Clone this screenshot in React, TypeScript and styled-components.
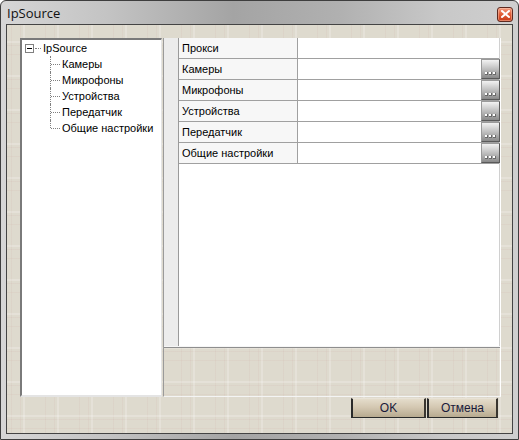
import React from 'react';
import styled, { createGlobalStyle } from 'styled-components';

const GlobalStyle = createGlobalStyle`
    html, body {
        margin: 0;
        padding: 0;
        background: #ffffff;
    }

    * {
        box-sizing: border-box;
    }
`;

const treeItems = ['Камеры', 'Микрофоны', 'Устройства', 'Передатчик', 'Общие настройки'];

interface PropertyRow {
    name: string;
    editor?: boolean;
}

const rows: PropertyRow[] = [
    { name: 'Прокси' },
    { name: 'Камеры', editor: true },
    { name: 'Микрофоны', editor: true },
    { name: 'Устройства', editor: true },
    { name: 'Передатчик', editor: true },
    { name: 'Общие настройки', editor: true },
];

// beige skin with a faint square pattern
const beige = `
    background-color: #dedace;
    background-image:
        linear-gradient(90deg, transparent 0 16px, rgba(255, 255, 255, 0.2) 16px 18px, transparent 18px 34px),
        linear-gradient(0deg, transparent 0 16px, rgba(255, 255, 255, 0.2) 16px 18px, transparent 18px 34px),
        linear-gradient(90deg, transparent 0 4px, rgba(205, 170, 160, 0.12) 4px 5px, transparent 5px 13px, rgba(205, 170, 160, 0.12) 13px 14px, transparent 14px 34px),
        linear-gradient(0deg, transparent 0 4px, rgba(205, 170, 160, 0.12) 4px 5px, transparent 5px 13px, rgba(205, 170, 160, 0.12) 13px 14px, transparent 14px 34px);
    background-size: 34px 34px;
`;

const Window = styled.div`
    display: flex;
    flex-direction: column;
    width: 519px;
    height: 440px;
    padding: 0 5px 5px 5px;
    border: 1px solid #3e3e3e;
    border-radius: 6px 6px 0 0;
    background: linear-gradient(90deg, #d6d6d6 0%, #c4c4c4 20%, #a4a4a4 45%, #b0b0b0 65%, #c8c8c8 85%, #cfcfcf 100%);
    font-family: 'Liberation Sans', Arial, sans-serif;
`;

const TitleBar = styled.div`
    display: flex;
    align-items: center;
    justify-content: space-between;
    height: 23px;
    padding: 0 0 0 1px;
`;

const Title = styled.span`
    font-family: 'Open Sans', 'Noto Sans', sans-serif;
    font-size: 13px;
    color: #111111;
    margin-top: 1px;
`;

const CloseButton = styled.div`
    display: flex;
    align-items: center;
    justify-content: center;
    width: 16px;
    height: 15px;
    margin-top: 3px;
    border: 1px solid #5e2a20;
    border-radius: 3px;
    background: linear-gradient(180deg, #f5a084 0%, #e2603a 45%, #c83a16 100%);
    box-shadow: inset 0 0 0 1px rgba(255, 210, 190, 0.45);
`;

const Client = styled.div`
    display: flex;
    flex-direction: column;
    flex: 1;
    border: 1px solid #444444;
    ${beige}
`;

const Body = styled.div`
    display: flex;
    gap: 1px;
    height: 372px;
    padding: 13px 10px 0 13px;
`;

const TreePanel = styled.div`
    width: 142px;
    height: 359px;
    padding: 0 0 0 3px;
    background: #ffffff;
    border-top: 2px solid #7a7a7a;
    border-left: 2px solid #7a7a7a;
    border-right: 1px solid #e4e4e4;
    border-bottom: 2px solid #e4e4e4;
    font-size: 11px;
    color: #000000;
    white-space: nowrap;
`;

const TreeRow = styled.div`
    display: flex;
    align-items: center;
    height: 16px;
`;

const Expander = styled.span`
    display: flex;
    align-items: center;
    justify-content: center;
    width: 9px;
    height: 9px;
    border: 1px solid #808080;
    background: #ffffff;

    &::after {
        content: '';
        width: 5px;
        height: 1px;
        background: #000000;
    }
`;

const RootDots = styled.span`
    width: 6px;
    margin: 0 2px 0 1px;
    border-top: 1px dotted #808080;
`;

const Children = styled.div`
    padding-left: 25px;
`;

const Connector = styled.span<{ $last?: boolean }>`
    position: relative;
    width: 11px;
    height: 16px;
    margin-right: 1px;

    &::before {
        content: '';
        position: absolute;
        left: 0;
        top: 0;
        height: ${(p) => (p.$last ? '8px' : '16px')};
        border-left: 1px dotted #808080;
    }

    &::after {
        content: '';
        position: absolute;
        left: 1px;
        top: 8px;
        width: 9px;
        border-top: 1px dotted #808080;
    }
`;

const RightPanel = styled.div`
    display: flex;
    flex-direction: column;
    width: 338px;
    height: 359px;
    border-left: 1px solid #9a9a9a;
    border-right: 1px solid #ffffff;
    border-bottom: 1px solid #f4f4f4;
`;

const Grid = styled.div`
    display: flex;
    height: 309px;
    border-bottom: 1px solid #f6f6f6;
`;

const Gutter = styled.div`
    width: 15px;
    background: #ececec;
    border-right: 1px solid #9a9a9a;
`;

const Rows = styled.div`
    flex: 1;
    background: #ffffff;
    border-right: 1px solid #d0d0d0;
`;

const Row = styled.div`
    display: flex;
    height: 21px;
    border-bottom: 1px solid #a0a0a0;
    font-size: 11px;
`;

const NameCell = styled.div`
    display: flex;
    align-items: center;
    width: 119px;
    padding-left: 3px;
    background: #f7f7f7;
    border-right: 1px solid #a0a0a0;
    color: #000000;
`;

const ValueCell = styled.div`
    display: flex;
    justify-content: flex-end;
    flex: 1;
    background: #ffffff;
`;

const EllipsisButton = styled.div`
    display: flex;
    align-items: flex-end;
    justify-content: center;
    gap: 1px;
    width: 19px;
    height: 20px;
    margin-right: -1px;
    padding-bottom: 3px;
    border: 1px solid #5a5a5a;
    border-top-color: #9a9a9a;
    border-left-color: #9a9a9a;
    background: linear-gradient(180deg, #f2f2f2 0%, #c4c4c4 45%, #8a8a8a 100%);
`;

const Dot = styled.span`
    width: 3px;
    height: 3px;
    background: #ffffff;
    border-right: 1px solid #6a6a6a;
    border-bottom: 1px solid #6a6a6a;
`;

const PanelFill = styled.div`
    flex: 1;
    border-top: 1px solid #8e8e8e;
`;

const Footer = styled.div`
    display: flex;
    justify-content: flex-end;
    gap: 1px;
    padding: 1px 14px 0 0;
`;

const Button = styled.div<{ $width: number }>`
    display: flex;
    align-items: center;
    justify-content: center;
    width: ${(p) => p.$width}px;
    height: 20px;
    border-left: 2px solid #2a2a2a;
    border-right: 2px solid #3a3630;
    border-bottom: 1px solid #2a2a2a;
    border-top: 1px solid #e8e2d6;
    background: linear-gradient(180deg, #e4dccb 0%, #d4c8b2 45%, #b8aa90 100%);
    font-size: 12px;
    color: #1a1a3a;
`;

const App: React.FC = () => (
    <>
        <GlobalStyle />
        <Window>
            <TitleBar>
                <Title>IpSource</Title>
                <CloseButton>
                    <svg width="9" height="8" viewBox="0 0 9 8">
                        <path
                            d="M1 1 L8 7 M8 1 L1 7"
                            stroke="#ffffff"
                            strokeWidth="2"
                            strokeLinecap="square"
                        />
                    </svg>
                </CloseButton>
            </TitleBar>
            <Client>
                <Body>
                    <TreePanel>
                        <TreeRow>
                            <Expander />
                            <RootDots />
                            IpSource
                        </TreeRow>
                        <Children>
                            {treeItems.map((item, i) => (
                                <TreeRow key={item}>
                                    <Connector $last={i === treeItems.length - 1} />
                                    {item}
                                </TreeRow>
                            ))}
                        </Children>
                    </TreePanel>
                    <RightPanel>
                        <Grid>
                            <Gutter />
                            <Rows>
                                {rows.map(({ name, editor }) => (
                                    <Row key={name}>
                                        <NameCell>{name}</NameCell>
                                        <ValueCell>
                                            {editor && (
                                                <EllipsisButton>
                                                    <Dot />
                                                    <Dot />
                                                    <Dot />
                                                </EllipsisButton>
                                            )}
                                        </ValueCell>
                                    </Row>
                                ))}
                            </Rows>
                        </Grid>
                        <PanelFill />
                    </RightPanel>
                </Body>
                <Footer>
                    <Button $width={75}>OK</Button>
                    <Button $width={71}>Отмена</Button>
                </Footer>
            </Client>
        </Window>
    </>
);

export default App;
